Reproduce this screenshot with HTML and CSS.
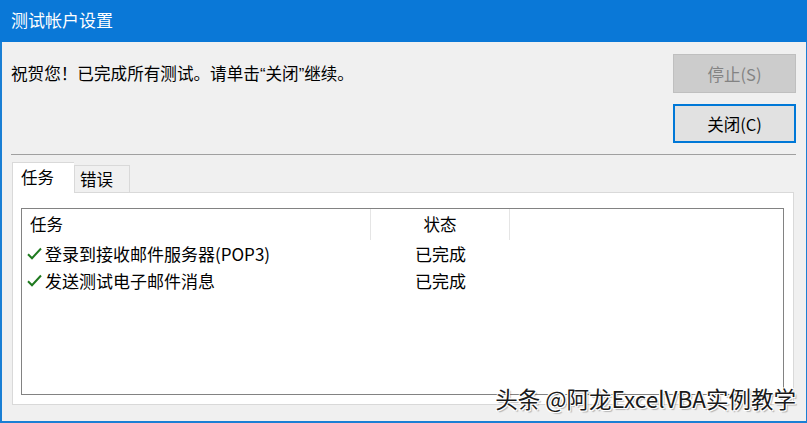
FILE: index.html
```html
<!DOCTYPE html>
<html lang="zh-CN">
<head>
<meta charset="utf-8">
<title>测试帐户设置</title>
<link rel="stylesheet" href="styles.css">
</head>
<body>
<div class="window">
  <div class="titlebar">测试帐户设置</div>
  <div class="content">
    <div class="top">
      <div class="message">祝贺您！已完成所有测试。请单击<span class="quote">“</span>关闭<span class="quote">”</span>继续。</div>
      <div class="buttons">
        <button class="btn btn-disabled" disabled>停止(S)</button>
        <button class="btn btn-default">关闭(C)</button>
      </div>
    </div>
    <div class="separator"></div>
    <div class="tabs">
      <div class="tab tab-active">任务</div>
      <div class="tab">错误</div>
    </div>
    <div class="panel">
      <div class="list">
        <div class="list-header">
          <div class="col col-task">任务</div>
          <div class="col col-status">状态</div>
          <div class="col col-rest"></div>
        </div>
        <div class="row">
          <div class="cell cell-task">
            <svg class="check" viewBox="0 0 15 13" width="15" height="13"><path d="M1 7.2 L5 11.2 L14 1.5" fill="none" stroke="#1f7a1f" stroke-width="2"/></svg>
            <span>登录到接收邮件服务器(POP3)</span>
          </div>
          <div class="cell cell-status">已完成</div>
        </div>
        <div class="row">
          <div class="cell cell-task">
            <svg class="check" viewBox="0 0 15 13" width="15" height="13"><path d="M1 7.2 L5 11.2 L14 1.5" fill="none" stroke="#1f7a1f" stroke-width="2"/></svg>
            <span>发送测试电子邮件消息</span>
          </div>
          <div class="cell cell-status">已完成</div>
        </div>
      </div>
    </div>
  </div>
  <div class="watermark">头条 @阿龙ExcelVBA实例教学</div>
</div>
</body>
</html>
```

FILE: styles.css
```css
* { box-sizing: border-box; }

html, body {
  margin: 0;
  padding: 0;
  background: #f0f0f0;
}

body {
  font-family: "Noto Sans CJK SC", "Noto Sans", sans-serif;
  font-size: 16px;
  color: #000;
}

.window {
  position: relative;
  width: 807px;
  height: 423px;
  border: 1px solid #1a7fd4;
  border-left-width: 2px;
  border-bottom-width: 2px;
  background: #f0f0f0;
  display: flex;
  flex-direction: column;
}

.titlebar {
  height: 42px;
  flex: none;
  background: #0a78d7;
  color: #fff;
  font-size: 17px;
  line-height: 40px;
  margin: -1px -1px 0 -2px;
  padding-left: 11px;
}

.content {
  flex: 1;
  display: flex;
  flex-direction: column;
  padding: 0 10px 0 9px;
}

.top {
  display: flex;
  justify-content: space-between;
  align-items: flex-start;
}

.message {
  margin-top: 20px;
  line-height: 22px;
  font-size: 16.6px;
}

.quote {
  font-family: "Liberation Sans", sans-serif;
}

.buttons {
  display: flex;
  flex-direction: column;
  gap: 11px;
  margin-top: 12px;
}

.btn {
  width: 123px;
  height: 39px;
  font-family: inherit;
  font-size: 16.5px;
  padding: 0;
  border-radius: 0;
}

.btn-disabled {
  background: #cccccc;
  border: 1px solid #bfbfbf;
  color: #838383;
}

.btn-default {
  background: #e1e1e1;
  border: 2px solid #0078d7;
  color: #000;
}

.separator {
  margin-top: 11px;
  height: 1px;
  background: #a0a0a0;
}

.tabs {
  display: flex;
  align-items: flex-end;
  margin-top: 7px;
  padding-left: 1px;
  position: relative;
  z-index: 1;
  height: 30px;
}

.tab {
  height: 27px;
  width: 56px;
  border: 1px solid #d9d9d9;
  border-bottom: none;
  background: #f0f0f0;
  padding-left: 5px;
  line-height: 26px;
  font-size: 16.5px;
}

.tab-active {
  width: 62px;
  height: 31px;
  background: #fff;
  padding-left: 8px;
  line-height: 28px;
  margin-bottom: -1px;
  border-right: none;
}

.panel {
  margin-left: 1px;
  margin-right: 2px;
  height: 213px;
  background: #fff;
  border: 1px solid #d9d9d9;
  padding: 15px 9px 9px 8px;
}

.list {
  height: 100%;
  border: 1px solid #828282;
  background: #fff;
}

.list-header {
  display: flex;
  height: 31px;
}

.col {
  line-height: 31px;
  font-size: 16.5px;
}

.col-task {
  width: 349px;
  padding-left: 8px;
  border-right: 1px solid #e5e5e5;
}

.col-status {
  width: 139px;
  text-align: center;
  border-right: 1px solid #e5e5e5;
}

.row {
  display: flex;
  height: 27px;
  align-items: center;
}

.cell {
  font-size: 17px;
  line-height: 27px;
}

.cell-task {
  width: 349px;
  display: flex;
  align-items: center;
  padding-left: 5px;
}

.check {
  margin-right: 3px;
  flex: none;
}

.cell-status {
  width: 139px;
  text-align: center;
}

.watermark {
  position: absolute;
  right: 10px;
  bottom: 8px;
  font-size: 22.5px;
  line-height: 30px;
  color: #1a1a1a;
  text-shadow: 1px 1px 0 #fff, -1px -1px 0 #fff, 1px -1px 0 #fff, -1px 1px 0 #fff, 2px 2px 1px rgba(0,0,0,0.25);
}
```
